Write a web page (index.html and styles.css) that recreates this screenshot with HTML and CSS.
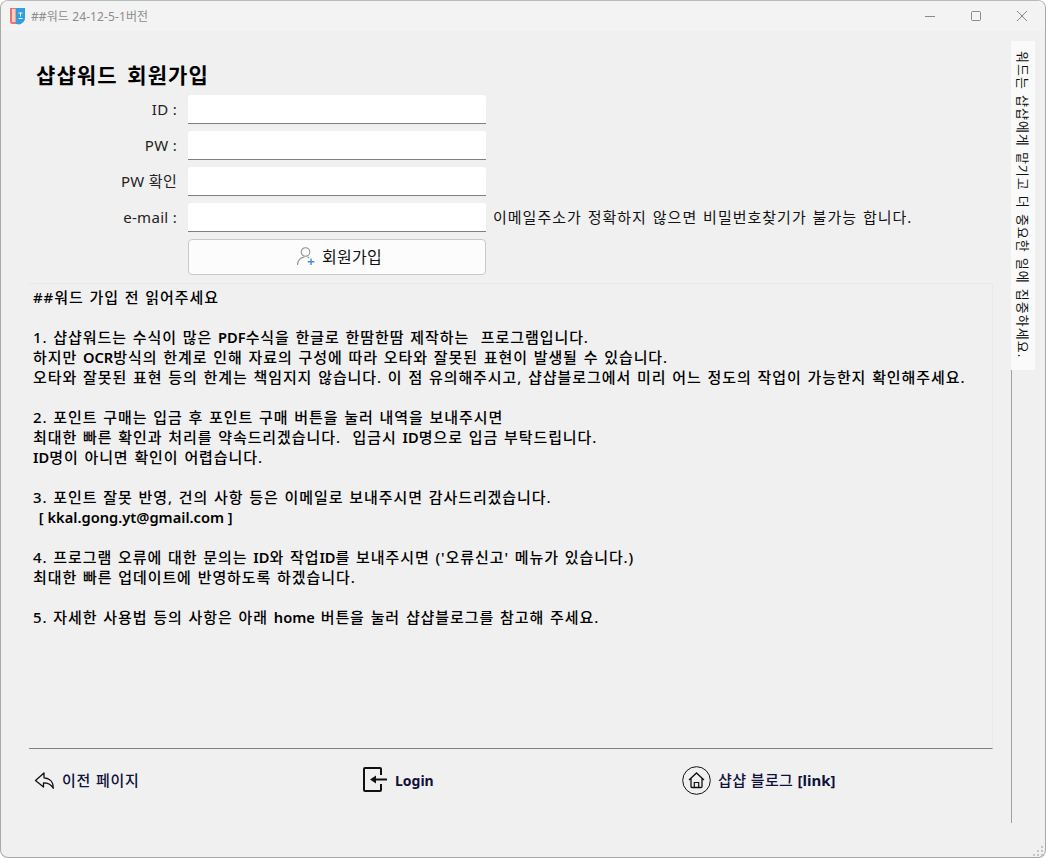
FILE: index.html
```html
<!DOCTYPE html>
<html lang="ko">
<head>
<meta charset="utf-8">
<title>##워드 회원가입</title>
<link rel="stylesheet" href="styles.css">
</head>
<body>
<div class="window">
  <header class="titlebar">
    <svg class="app-icon" width="15" height="17" viewBox="0 0 15 17">
      <path d="M0 0h6v16H2.500Q0 16 0 13.500z" fill="#e8746a"/>
      <path d="M2 1h3.500v13H2z" fill="#f3d0ca"/>
      <path d="M6 0h9v10q0 4-5.500 6.500L6 16z" fill="#2f9fe0"/>
      <path d="M8.500 5h4M10.500 5v3.500M8.500 10.500h4" stroke="#fff" stroke-width="1" fill="none"/>
    </svg>
    <span class="app-title">##워드 24-12-5-1버전</span>
    <div class="controls">
      <svg width="12" height="12" viewBox="0 0 12 12"><path d="M1 6.500h10" stroke="#8a8a8a" fill="none"/></svg>
      <svg width="12" height="12" viewBox="0 0 12 12"><rect x="1.500" y="1.500" width="9" height="9" rx="1" stroke="#8a8a8a" fill="none"/></svg>
      <svg width="12" height="12" viewBox="0 0 12 12"><path d="M1 1l10 10M11 1L1 11" stroke="#8a8a8a" fill="none"/></svg>
    </div>
  </header>

  <div class="body">
    <main class="main">
      <h1 class="heading">샵샵워드 회원가입</h1>
      <form class="form">
        <label class="label">ID :</label>
        <input class="input" type="text">
        <span></span>
        <label class="label">PW :</label>
        <input class="input" type="password">
        <span></span>
        <label class="label">PW 확인</label>
        <input class="input" type="password">
        <span></span>
        <label class="label">e-mail :</label>
        <input class="input" type="text">
        <span class="hint">이메일주소가 정확하지 않으면 비밀번호찾기가 불가능 합니다.</span>
        <span></span>
        <button class="signup" type="button">
          <svg width="20" height="20" viewBox="0 0 20 20">
            <circle cx="9.500" cy="6" r="4.300" fill="none" stroke="#8f8f8f" stroke-width="1.100"/>
            <path d="M1.500 19c.3-4.500 3-7.500 7-8" fill="none" stroke="#8f8f8f" stroke-width="1.100"/>
            <path d="M11.500 11.300q1 .3 1.500.7" fill="none" stroke="#8f8f8f" stroke-width="1.100"/>
            <path d="M15 12.500v6.500M11.800 15.700h6.500" fill="none" stroke="#3f8ae0" stroke-width="1.400"/>
          </svg>
          <span>회원가입</span>
        </button>
      </form>

      <section class="notice">
        <p>##워드 가입 전 읽어주세요</p>
        <p>1. 샵샵워드는 수식이 많은 <span class="en">PDF</span>수식을 한글로 한땀한땀 제작하는&nbsp; 프로그램입니다.<br>
        하지만 <span class="en">OCR</span>방식의 한계로 인해 자료의 구성에 따라 오타와 잘못된 표현이 발생될 수 있습니다.<br>
        오타와 잘못된 표현 등의 한계는 책임지지 않습니다. 이 점 유의해주시고, 샵샵블로그에서 미리 어느 정도의 작업이 가능한지 확인해주세요.</p>
        <p>2. 포인트 구매는 입금 후 포인트 구매 버튼을 눌러 내역을 보내주시면<br>
        최대한 빠른 확인과 처리를 약속드리겠습니다.&nbsp; 입금시 <span class="en">ID</span>명으로 입금 부탁드립니다.<br>
        <span class="en">ID</span>명이 아니면 확인이 어렵습니다.</p>
        <p>3. 포인트 잘못 반영, 건의 사항 등은 이메일로 보내주시면 감사드리겠습니다.<br>
        &nbsp;<span class="en">[ kkal.gong.yt@gmail.com ]</span></p>
        <p>4. 프로그램 오류에 대한 문의는 <span class="en">ID</span>와 작업<span class="en">ID</span>를 보내주시면 ('오류신고' 메뉴가 있습니다.)<br>
        최대한 빠른 업데이트에 반영하도록 하겠습니다.</p>
        <p>5. 자세한 사용법 등의 사항은 아래 <span class="en">home</span> 버튼을 눌러 샵샵블로그를 참고해 주세요.</p>
      </section>

      <nav class="footer">
        <a class="link link-back">
          <svg width="21" height="20" viewBox="0 0 21 20">
            <path d="M10 3L1.500 10.500l8 6.500v-4.200c4 0 7.500 1 9.800 5.500.3-5.500-2.800-10-9.300-10.500z" fill="none" stroke="#111" stroke-width="1.300" stroke-linejoin="round"/>
          </svg>
          <span class="nudge">이전 페이지</span>
        </a>
        <a class="link link-login">
          <svg width="25" height="26" viewBox="0 0 25 26">
            <path d="M18 8V2a1 1 0 0 0-1-1H2a1 1 0 0 0-1 1v21a1 1 0 0 0 1 1h15a1 1 0 0 0 1-1v-6" fill="none" stroke="#111" stroke-width="2"/>
            <path d="M24 12.500H10" stroke="#111" stroke-width="2" fill="none"/>
            <path d="M7 12.500l6-4v8z" fill="#111"/>
          </svg>
          <span class="login-text">Login</span>
        </a>
        <a class="link link-home">
          <svg width="29" height="29" viewBox="0 0 29 29">
            <circle cx="14.500" cy="14.500" r="13.800" fill="none" stroke="#111" stroke-width="1"/>
            <path d="M7 14L14.500 7l7.500 7M9 12.500V20.500a1 1 0 0 0 1 1h9a1 1 0 0 0 1-1V12.500" fill="none" stroke="#111" stroke-width="1.300"/>
            <path d="M12.300 21.500V16.500h4.400v5" fill="none" stroke="#111" stroke-width="1.200"/>
          </svg>
          <span class="nudge">샵샵 블로그 <b class="link-tag">[link]</b></span>
        </a>
      </nav>
    </main>

    <aside class="side">
      <div class="tab"><span class="tab-text">워드는 샵샵에게 맡기고 더 중요한 일에 집중하세요.</span></div>
      <div class="side-line"></div>
    </aside>
  </div>
  <svg class="grip" width="12" height="12" viewBox="0 0 12 12">
    <path d="M8 1h2v2H8zM4 5h2v2H4zM8 5h2v2H8zM0 9h2v2H0zM4 9h2v2H4zM8 9h2v2H8z" fill="#c4c4c4"/>
  </svg>
</div>
</body>
</html>
```

FILE: styles.css
```css
* { box-sizing: border-box; }
html, body { margin: 0; padding: 0; height: 100%; }
body {
  background: #fff;
  font-family: "Noto Sans", "Noto Sans CJK KR", sans-serif;
  color: #000;
  overflow: hidden;
}
.window {
  position: relative;
  width: 1046px;
  height: 858px;
  display: flex;
  flex-direction: column;
  background: #f0f0f0;
  border: 1px solid #a9a9a9;
  border-top-color: #b4bcbc;
  border-radius: 8px;
  overflow: hidden;
}
.titlebar {
  height: 30px;
  flex: none;
  background: #f3f3f3;
  display: flex;
  align-items: center;
  padding-left: 9px;
}
.app-icon { margin-right: 6px; }
.app-title {
  font-size: 12px;
  letter-spacing: 0.1px;
  color: #8c8c8c;
}
.controls {
  margin-left: auto;
  display: flex;
  gap: 34px;
  padding: 0 17px 1px 0;
}
.body {
  flex: 1;
  display: flex;
  min-height: 0;
}
.main {
  width: 1010px;
  flex: none;
  display: flex;
  flex-direction: column;
  padding: 28px 18px 0 28px;
}
.heading {
  margin: 0 0 4px 7px;
  font-size: 21px;
  font-weight: 700;
  letter-spacing: 1.1px;
  word-spacing: 3px;
  line-height: 32px;
  height: 32px;
}
.form {
  display: grid;
  grid-template-columns: 148px 298px 1fr;
  column-gap: 11px;
  row-gap: 7px;
  align-items: center;
}
.form .hint {
  margin-left: -4px;
  padding-bottom: 2px;
  font-size: 15px;
  letter-spacing: 1px;
  word-spacing: 1px;
  white-space: nowrap;
  color: #111;
}
.label {
  font-size: 15px;
  letter-spacing: 0.3px;
  color: #222;
  text-align: right;
  padding-bottom: 2px;
}
.input {
  height: 29px;
  background: #fff;
  border: 0;
  border-bottom: 1px solid #808080;
  border-radius: 3px 3px 0 0;
  padding: 0;
  width: 100%;
}
.signup {
  height: 36px;
  background: #fcfcfc;
  border: 1px solid #c9c9c9;
  border-radius: 4px;
  display: flex;
  align-items: center;
  justify-content: center;
  gap: 6px;
  font: 16px "Noto Sans", "Noto Sans CJK KR", sans-serif;
  letter-spacing: 0.3px;
  color: #111;
  padding: 0 0 2px 4px;
}
.notice {
  height: 466px;
  margin-top: 8px;
  padding: 3px 4px 0 4px;
  border: 1px solid #e9e9e9;
  border-bottom: 1px solid #808080;
  border-left: 0;
  font-size: 15px;
  font-weight: 500;
  letter-spacing: 0.92px;
  word-spacing: 1px;
  line-height: 20px;
}
.notice p { margin: 0 0 20px; white-space: nowrap; }
.en {
  font-size: 14.67px;
  font-weight: 600;
  letter-spacing: 0;
  word-spacing: 0;
}
.footer {
  display: flex;
  height: 62px;
  align-items: center;
  font-size: 15px;
  font-weight: 500;
  color: #10103a;
  padding-left: 5px;
}
.link { display: flex; align-items: center; gap: 7px; }
.link-back { width: 329px; letter-spacing: 0.8px; }
.link-login { width: 319px; }
.link-home { letter-spacing: 0.4px; }
.nudge { padding-bottom: 2px; }
.login-text { font-size: 14px; font-weight: 700; }
.link-tag { font-weight: 700; letter-spacing: 0; }
.side {
  width: 24px;
  display: flex;
  flex-direction: column;
  padding-top: 10px;
}
.tab {
  height: 329px;
  background: #fafafa;
  display: flex;
  justify-content: center;
  padding-top: 10px;
}
.tab-text {
  writing-mode: vertical-rl;
  text-orientation: sideways;
  font-size: 13px;
  letter-spacing: 1px;
  word-spacing: 0.7px;
  line-height: 22px;
  white-space: nowrap;
  color: #111;
}
.side-line {
  height: 453px;
  width: 0;
  border-left: 1px solid #a0a0a0;
}
.grip {
  position: absolute;
  right: 0;
  bottom: 0;
}
```
